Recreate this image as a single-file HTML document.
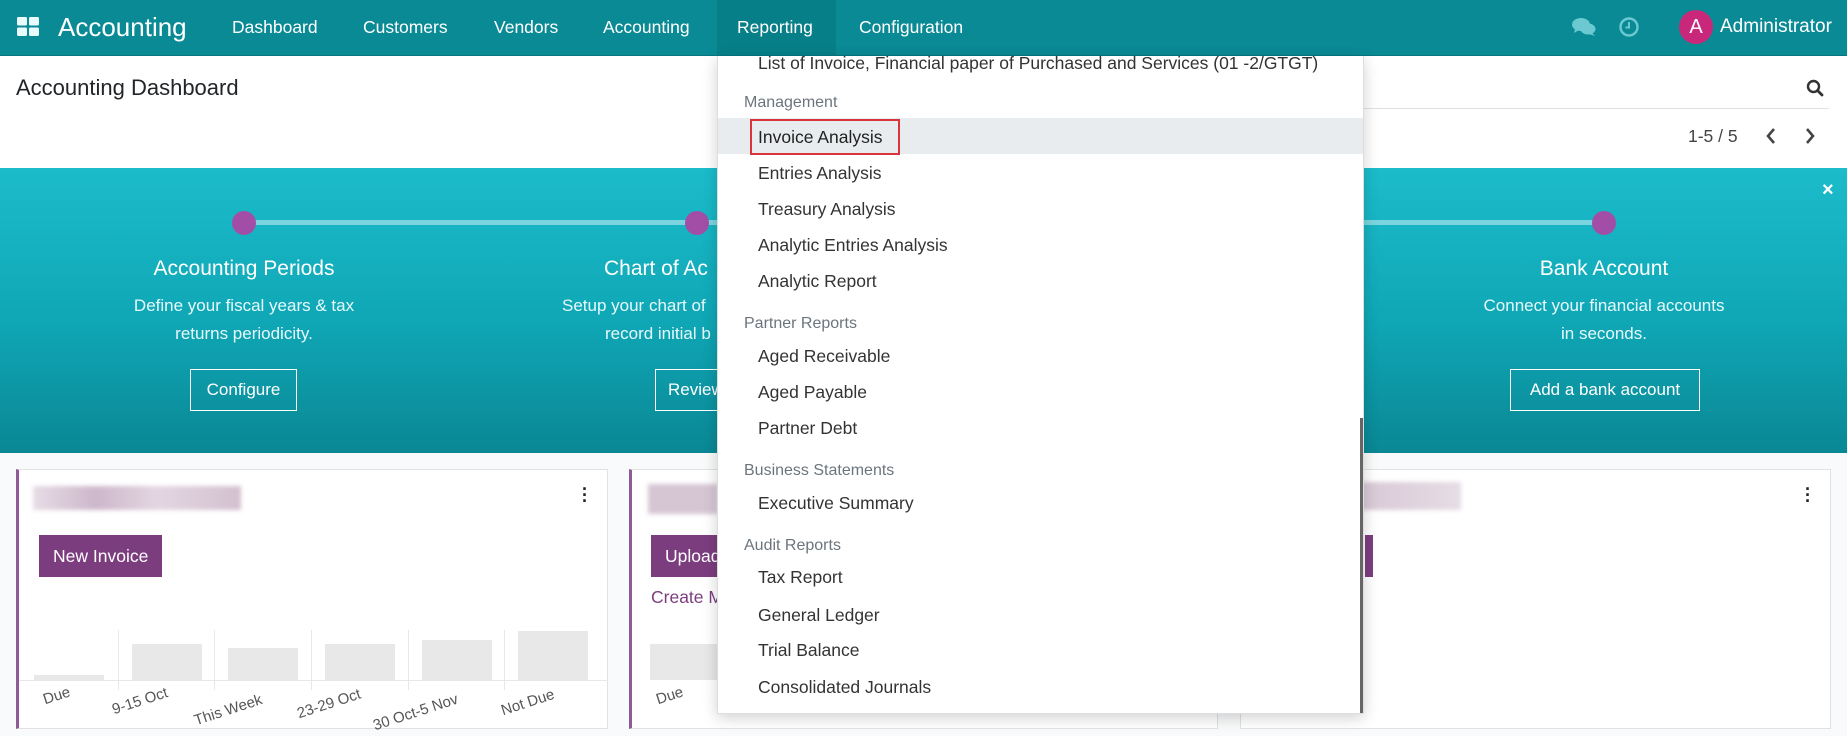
<!DOCTYPE html>
<html><head><meta charset="utf-8"><style>
*{margin:0;padding:0;box-sizing:border-box}
body{width:1847px;height:736px;overflow:hidden;position:relative;font-family:"Liberation Sans",sans-serif;background:#f9fafb;color:#212529}
.a{position:absolute;white-space:nowrap}
.nav{position:absolute;left:0;top:0;width:1847px;height:56px;background:#05899a;background:#0a8a95;border-bottom:1px solid #077680}
.nav .i{position:absolute;top:17px;color:#fff;font-size:17.5px}
.banner{position:absolute;left:0;top:168px;width:1847px;height:285px;background:linear-gradient(180deg,#1cbccb 0%,#0fa6b5 55%,#0a8794 100%)}
.wt{color:#fff;text-align:center;position:absolute;transform:translateX(-50%)}
.h{font-size:21px}
.d{font-size:17px;line-height:28px;color:#e6fafc}
.btn{position:absolute;border:1px solid #fff;color:#fff;font-size:17px;text-align:center;line-height:40px;height:42px}
.dot{position:absolute;width:24px;height:24px;border-radius:50%;background:#a24ea6;top:211px}
.card{position:absolute;top:469px;height:260px;background:#fff;border:1px solid #e2e2e2}
.pbtn{position:absolute;background:#7c3d7f;color:#fff;font-size:17.5px;line-height:42px;height:42px;padding:0 14px}
.dd{position:absolute;left:717px;top:56px;width:647px;height:658px;background:#fff;box-shadow:0 4px 14px rgba(0,0,0,.18);border:1px solid #ddd;border-top:0;overflow:hidden}
.dd .it{position:absolute;left:40px;font-size:17.5px;color:#333}
.dd .hd{position:absolute;left:26px;font-size:16px;color:#6c757d}
.bar{position:absolute;background:#e8e8e8}
.vl{position:absolute;width:1px;background:#e8e8e8}
.lb{position:absolute;font-size:15px;color:#555;transform:rotate(-18deg);transform-origin:left top}
.blur{position:absolute;filter:blur(2px)}
</style></head><body>
<div class="nav">
 <svg class="a" style="left:17px;top:17px" width="22" height="19" viewBox="0 0 22 19"><rect x="0" y="0" width="10" height="8.5" rx="1.5" fill="#e8fbfd"/><rect x="12" y="0" width="10" height="8.5" rx="1.5" fill="#e8fbfd"/><rect x="0" y="10.5" width="10" height="8.5" rx="1.5" fill="#e8fbfd"/><rect x="12" y="10.5" width="10" height="8.5" rx="1.5" fill="#e8fbfd"/></svg>
 <div class="a" style="left:58px;top:12px;color:#fff;font-size:26px">Accounting</div>
 <div class="i a" style="left:232px">Dashboard</div>
 <div class="i a" style="left:363px">Customers</div>
 <div class="i a" style="left:494px">Vendors</div>
 <div class="i a" style="left:603px">Accounting</div>
 <div class="a" style="left:717px;top:0;width:119px;height:55px;background:#077f88"></div>
 <div class="i a" style="left:737px">Reporting</div>
 <div class="i a" style="left:859px">Configuration</div>
 <svg class="a" style="left:1572px;top:17px" width="24" height="20" viewBox="0 0 24 20"><ellipse cx="9" cy="7.5" rx="9" ry="6.5" fill="#6cc9d1"/><path d="M3 12 L2 16 L7 13Z" fill="#6cc9d1"/><ellipse cx="16" cy="12" rx="7.5" ry="5.5" fill="#6cc9d1"/><path d="M20 16 L23 19 L17 17Z" fill="#6cc9d1"/></svg>
 <svg class="a" style="left:1618px;top:16px" width="22" height="22" viewBox="0 0 22 22"><circle cx="11" cy="11" r="8.5" fill="none" stroke="#6cc9d1" stroke-width="2.4"/><path d="M11 6 V11.5 H7.5" fill="none" stroke="#6cc9d1" stroke-width="2"/></svg>
 <div class="a" style="left:1679px;top:10px;width:34px;height:34px;border-radius:50%;background:#c9287a;color:#fff;font-size:20px;text-align:center;line-height:34px">A</div>
 <div class="a" style="left:1720px;top:16px;color:#fff;font-size:19px">Administrator</div>
</div>
<div class="a" style="left:0;top:56px;width:1847px;height:112px;background:#fff"></div>
<div class="a" style="left:16px;top:75px;font-size:22px">Accounting Dashboard</div>
<svg class="a" style="left:1806px;top:79px" width="18" height="18" viewBox="0 0 18 18"><circle cx="7.5" cy="7.5" r="5.5" fill="none" stroke="#333" stroke-width="2.4"/><path d="M11.5 11.5 L16 16" stroke="#333" stroke-width="2.8" stroke-linecap="round"/></svg>
<div class="a" style="left:1364px;top:108px;width:465px;height:1px;background:#dee2e6"></div>
<div class="a" style="left:1688px;top:126px;font-size:17.5px;color:#444">1-5 / 5</div>
<svg class="a" style="left:1764px;top:127px" width="14" height="18" viewBox="0 0 14 18"><path d="M10 2 L4 9 L10 16" fill="none" stroke="#444" stroke-width="2.6"/></svg>
<svg class="a" style="left:1803px;top:127px" width="14" height="18" viewBox="0 0 14 18"><path d="M4 2 L10 9 L4 16" fill="none" stroke="#444" stroke-width="2.6"/></svg>
<div class="banner">
 <div class="a" style="left:255px;top:52px;width:1350px;height:5px;background:#7bd5de"></div>
</div>
<div class="dot" style="left:232px"></div>
<div class="dot" style="left:685px"></div>
<div class="dot" style="left:1592px"></div>
<div class="a" style="left:1822px;top:179px;color:#fff;font-size:20px;font-weight:bold">×</div>
<div class="wt h" style="left:244px;top:257px">Accounting Periods</div>
<div class="wt d" style="left:244px;top:292px">Define your fiscal years &amp; tax<br>returns periodicity.</div>
<div class="btn" style="left:190px;top:369px;width:107px">Configure</div>
<div class="a" style="left:604px;top:257px;color:#fff;font-size:21px">Chart of Ac</div>
<div class="a d" style="left:562px;top:292px;color:#e6fafc">Setup your chart of</div>
<div class="a d" style="left:605px;top:320px;color:#e6fafc">record initial b</div>
<div class="btn" style="left:655px;top:369px;width:80px;text-align:left;padding-left:12px">Review</div>
<div class="wt h" style="left:1604px;top:257px">Bank Account</div>
<div class="wt d" style="left:1604px;top:292px">Connect your financial accounts<br>in seconds.</div>
<div class="btn" style="left:1510px;top:369px;width:190px">Add a bank account</div>

<div class="card" style="left:16px;width:592px;border-left:3px solid #8f5a97">
 <div class="blur" style="left:14px;top:16px;width:208px;height:24px;background:linear-gradient(90deg,#e7dde6,#cdb7cb 30%,#e3d6e1 60%,#d3c0d0)"></div>
 <div class="a" style="left:563px;top:16px;font-size:18px;font-weight:bold;line-height:6px">·<br>·<br>·</div>
 <div class="pbtn" style="left:20px;top:65px">New Invoice</div>
 <div class="a" style="left:0;top:210px;width:589px;height:1px;background:#e8e8e8"></div>
 <div class="vl" style="left:99px;top:160px;height:60px"></div><div class="vl" style="left:195px;top:160px;height:60px"></div><div class="vl" style="left:292px;top:160px;height:60px"></div><div class="vl" style="left:389px;top:160px;height:60px"></div><div class="vl" style="left:485px;top:160px;height:60px"></div>
 <div class="bar" style="left:15px;top:205px;width:70px;height:5px"></div>
 <div class="bar" style="left:113px;top:174px;width:70px;height:36px"></div>
 <div class="bar" style="left:209px;top:178px;width:70px;height:32px"></div>
 <div class="bar" style="left:306px;top:174px;width:70px;height:36px"></div>
 <div class="bar" style="left:403px;top:170px;width:70px;height:40px"></div>
 <div class="bar" style="left:499px;top:161px;width:70px;height:49px"></div>
 <div class="lb" style="left:22px;top:222px">Due</div>
 <div class="lb" style="left:91px;top:232px">9-15 Oct</div>
 <div class="lb" style="left:173px;top:243px">This Week</div>
 <div class="lb" style="left:276px;top:236px">23-29 Oct</div>
 <div class="lb" style="left:352px;top:248px">30 Oct-5 Nov</div>
 <div class="lb" style="left:480px;top:233px">Not Due</div>
</div>
<div class="card" style="left:629px;width:589px;border-left:3px solid #8f5a97">
 <div class="blur" style="left:16px;top:14px;width:70px;height:30px;background:#d6c6d4"></div>
 <div class="pbtn" style="left:19px;top:65px">Upload</div>
 <div class="a" style="left:19px;top:117px;color:#7c3d7f;font-size:17.5px">Create M</div>
 <div class="bar" style="left:18px;top:174px;width:70px;height:36px"></div>
 <div class="lb" style="left:22px;top:222px">Due</div>
</div>
<div class="card" style="left:1240px;width:591px">
 <div class="blur" style="left:120px;top:12px;width:100px;height:28px;background:linear-gradient(90deg,#d8c8d6,#e6dde5)"></div>
 <div class="a" style="left:124px;top:65px;width:8px;height:42px;background:#7c3d7f"></div>
 <div class="a" style="left:564px;top:16px;font-size:18px;font-weight:bold;line-height:6px">·<br>·<br>·</div>
</div>

<div class="dd">
 <div class="it" style="top:-3px">List of Invoice, Financial paper of Purchased and Services (01 -2/GTGT)</div>
 <div class="hd" style="top:38px">Management</div>
 <div class="a" style="left:0;top:62px;width:647px;height:36px;background:#e9ecef"></div>
 <div class="a" style="left:32px;top:63px;width:150px;height:36px;border:2px solid #d9343c"></div>
 <div class="it" style="top:71px;color:#222">Invoice Analysis</div>
 <div class="it" style="top:107px">Entries Analysis</div>
 <div class="it" style="top:143px">Treasury Analysis</div>
 <div class="it" style="top:179px">Analytic Entries Analysis</div>
 <div class="it" style="top:215px">Analytic Report</div>
 <div class="hd" style="top:259px">Partner Reports</div>
 <div class="it" style="top:290px">Aged Receivable</div>
 <div class="it" style="top:326px">Aged Payable</div>
 <div class="it" style="top:362px">Partner Debt</div>
 <div class="hd" style="top:406px">Business Statements</div>
 <div class="it" style="top:437px">Executive Summary</div>
 <div class="hd" style="top:481px">Audit Reports</div>
 <div class="it" style="top:511px">Tax Report</div>
 <div class="it" style="top:549px">General Ledger</div>
 <div class="it" style="top:584px">Trial Balance</div>
 <div class="it" style="top:621px">Consolidated Journals</div>
 <div class="a" style="left:642px;top:362px;width:3px;height:296px;background:#666"></div>
</div>
</body></html>
